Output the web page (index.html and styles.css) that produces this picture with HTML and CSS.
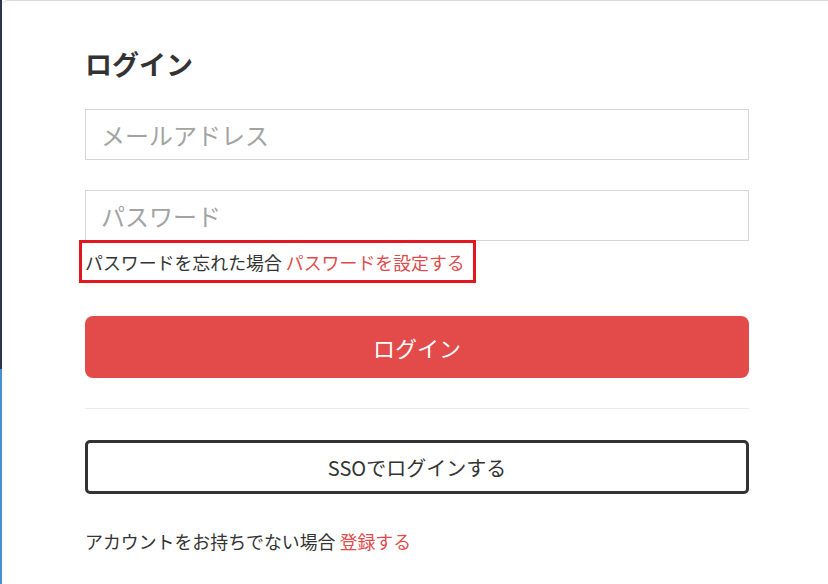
FILE: index.html
```html
<!DOCTYPE html>
<html lang="ja">
<head>
<meta charset="utf-8">
<title>ログイン</title>
<link rel="stylesheet" href="styles.css">
</head>
<body>
<div class="page">
  <div class="edge"></div>
  <main class="card">
    <h1 class="title">ログイン</h1>
    <form class="form">
      <input class="field" type="email" placeholder="メールアドレス">
      <input class="field field-pass" type="password" placeholder="パスワード">
      <div class="forgot-row">
        <span class="highlight">パスワードを忘れた場合 <a class="link" href="#">パスワードを設定する</a></span>
      </div>
      <button class="btn-login" type="button">ログイン</button>
      <hr class="divider">
      <button class="btn-sso" type="button">SSOでログインする</button>
      <p class="signup">アカウントをお持ちでない場合 <a class="link" href="#">登録する</a></p>
    </form>
  </main>
</div>
</body>
</html>
```
FILE: styles.css
```css
* { box-sizing: border-box; }
html, body {
  margin: 0;
  padding: 0;
  height: 100%;
}
body {
  font-family: "Noto Sans CJK JP", "Noto Sans", sans-serif;
  color: #333;
  background: #2b3550;
  overflow: hidden;
}
.page {
  display: flex;
  height: 584px;
  background: #ffffff;
}
.edge {
  width: 2px;
  flex: 0 0 2px;
  background: linear-gradient(to bottom, #2b3550 0, #2b3550 369px, #4a8fd4 369px, #4a8fd4 100%);
}
.card {
  flex: 1;
  background: #fff;
  border-top: 1px solid #d9d9d9;
  border-top-left-radius: 6px;
  padding: 48px 79px 0 83px;
}
.title {
  margin: 0;
  font-size: 27px;
  line-height: 30px;
  font-weight: 700;
  color: #333;
}
.form {
  display: flex;
  flex-direction: column;
  margin-top: 30px;
}
.field {
  height: 51px;
  border: 1px solid #d6d6d6;
  border-radius: 0;
  padding: 0 15px;
  font-family: inherit;
  font-size: 24px;
  color: #333;
  background: #fff;
  outline: none;
}
.field::placeholder {
  color: #a3a3a3;
}
.field-pass {
  margin-top: 30px;
}
.forgot-row {
  margin-top: -1px;
  margin-left: -6px;
  display: flex;
}
.highlight {
  border: 3px solid #e3161f;
  padding: 0 8px 0 3px;
  height: 43px;
  display: flex;
  align-items: center;
  font-size: 17.9px;
  color: #333;
  white-space: pre;
}
.link {
  color: #dd4c4c;
  text-decoration: none;
}
.btn-login {
  margin-top: 33px;
  height: 62px;
  border: none;
  border-radius: 8px;
  background: #e34a4a;
  color: #fff;
  font-family: inherit;
  font-size: 22px;
}
.divider {
  margin: 30px 0 0;
  border: none;
  border-top: 1px solid #ececec;
  height: 0;
}
.btn-sso {
  margin-top: 31px;
  height: 54px;
  border: 3px solid #333;
  border-radius: 5px;
  background: #fff;
  color: #333;
  font-family: inherit;
  font-size: 20px;
}
.signup {
  margin: 35px 0 0;
  font-size: 17.9px;
  line-height: 24px;
  color: #333;
  white-space: pre;
}
```
